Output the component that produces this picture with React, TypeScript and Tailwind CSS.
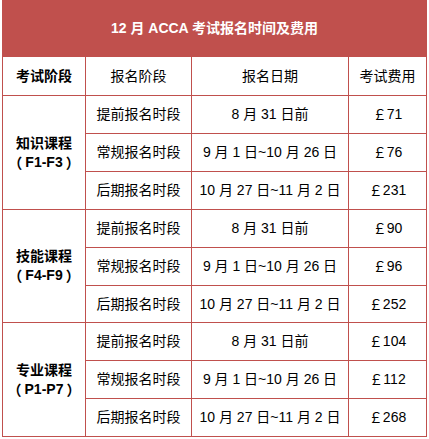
const groups = [
  { name: "知识课程", code: "F1-F3", fees: ["71", "76", "231"] },
  { name: "技能课程", code: "F4-F9", fees: ["90", "96", "252"] },
  { name: "专业课程", code: "P1-P7", fees: ["104", "112", "268"] },
];

const periods = [
  { label: "提前报名时段", date: "8 月 31 日前" },
  { label: "常规报名时段", date: "9 月 1 日~10 月 26 日" },
  { label: "后期报名时段", date: "10 月 27 日~11 月 2 日" },
];

const cell = "border border-[#c0504d] text-center align-middle p-0";

export default function App() {
  return (
    <div className="h-[439px] w-[429px] bg-white pl-[2px] font-['Liberation_Sans','Noto_Sans_CJK_SC',sans-serif] text-[14px] text-black">
      <table className="w-[424px] table-fixed border-collapse">
        <colgroup>
          <col className="w-[83px]" />
          <col className="w-[106px]" />
          <col className="w-[157px]" />
          <col className="w-[78px]" />
        </colgroup>
        <tbody>
          <tr>
            <td colSpan={4} className={`${cell} h-[56px] bg-[#c0504d] font-bold text-white`}>
              12 月 ACCA 考试报名时间及费用
            </td>
          </tr>
          <tr>
            <td className={`${cell} h-[39px] font-bold`}>考试阶段</td>
            <td className={`${cell} h-[39px]`}>报名阶段</td>
            <td className={`${cell} h-[39px]`}>报名日期</td>
            <td className={`${cell} h-[39px]`}>考试费用</td>
          </tr>
          {groups.map((group, g) =>
            periods.map((period, i) => (
              <tr key={group.name + period.label}>
                {i === 0 && (
                  <td rowSpan={3} className={`${cell} font-bold leading-[19px]`}>
                    <div>{group.name}</div>
                    <div className="flex items-center justify-center">
                      <span className="inline-block w-[14px] text-right font-['Noto_Sans_CJK_SC',sans-serif]">（</span>
                      <span className="px-[3px]">{group.code}</span>
                      <span className="inline-block w-[14px] text-left font-['Noto_Sans_CJK_SC',sans-serif]">）</span>
                    </div>
                  </td>
                )}
                <td className={`${cell} ${g === 1 && i === 2 ? "h-[37px]" : "h-[38px]"}`}>{period.label}</td>
                <td className={cell}>{period.date}</td>
                <td className={cell}>￡{group.fees[i]}</td>
              </tr>
            ))
          )}
        </tbody>
      </table>
    </div>
  );
}
